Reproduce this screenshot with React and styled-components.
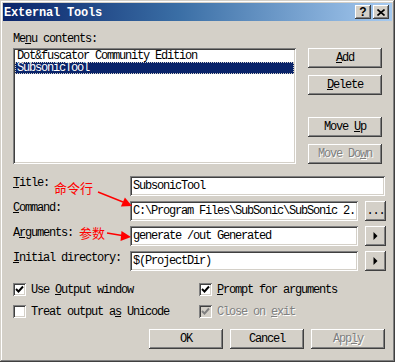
import styled, { createGlobalStyle } from "styled-components";

const Global = createGlobalStyle`
  html, body { margin: 0; padding: 0; background: #d4d0c8; }
  body {
    font-family: "Liberation Mono", "DejaVu Sans Mono", monospace;
    font-size: 12px;
    letter-spacing: -1.2px;
    color: #000;
  }
`;

const raised = `
  box-shadow: inset -1px -1px #404040, inset 1px 1px #ffffff,
    inset -2px -2px #808080, inset 2px 2px #d4d0c8;
`;

const sunken = `
  box-shadow: inset 1px 1px #808080, inset -1px -1px #ffffff,
    inset 2px 2px #404040, inset -2px -2px #d4d0c8;
`;

const Window = styled.div`
  position: relative;
  width: 395px;
  height: 362px;
  box-sizing: border-box;
  padding: 3px;
  background: #d4d0c8;
  box-shadow: inset -1px -1px #404040, inset 1px 1px #d4d0c8,
    inset -2px -2px #808080, inset 2px 2px #ffffff;
  display: flex;
  flex-direction: column;
`;

const TitleBar = styled.div`
  height: 18px;
  display: flex;
  align-items: center;
  padding: 0 3px 0 1px;
  background: linear-gradient(90deg, #0a246a 0%, #3a6ea5 45%, #a6caf0 100%);
  color: #fff;
  font-weight: bold;
  letter-spacing: -0.2px;
`;

const Caption = styled.span`
  flex: 1;
  padding-top: 1px;
`;

const CapButton = styled.button`
  width: 16px;
  height: 14px;
  margin-left: ${(p) => (p.$gap ? "2px" : "0")};
  padding: 0;
  border: none;
  background: #d4d0c8;
  ${raised}
  display: flex;
  align-items: center;
  justify-content: center;
  font: bold 12px "Liberation Sans", Arial, sans-serif;
  color: #000;
`;

const Body = styled.div`
  flex: 1;
  display: flex;
  flex-direction: column;
  padding: 12px 10px 0 10px;
`;

const u = (s) => <u>{s}</u>;

const Label = styled.div`
  line-height: 12px;
  white-space: nowrap;
  color: ${(p) => (p.$disabled ? "#808080" : "#000")};
  text-shadow: ${(p) => (p.$disabled ? "1px 1px #ffffff" : "none")};
`;

const TopRow = styled.div`
  display: flex;
  gap: 12px;
  margin-top: 3px;
`;

const ListBox = styled.div`
  width: 283px;
  height: 116px;
  box-sizing: border-box;
  padding: 2px;
  background: #fff;
  ${sunken}
`;

const Item = styled.div`
  height: 12px;
  line-height: 12px;
  padding-left: 2px;
  white-space: nowrap;
  color: ${(p) => (p.$selected ? "#fff" : "#000")};
  background: ${(p) => (p.$selected ? "#0a246a" : "transparent")};
  outline: ${(p) => (p.$selected ? "1px dotted #d4d0c8" : "none")};
  outline-offset: -1px;
`;

const ButtonColumn = styled.div`
  width: 74px;
  display: flex;
  flex-direction: column;
  gap: 7px;
`;

const Button = styled.button`
  width: ${(p) => p.$w || 74}px;
  height: 20px;
  margin-top: ${(p) => p.$mt || 0}px;
  padding: 0;
  border: none;
  background: #d4d0c8;
  ${raised}
  font: inherit;
  letter-spacing: inherit;
  color: ${(p) => (p.disabled ? "#808080" : "#000")};
  text-shadow: ${(p) => (p.disabled ? "1px 1px #ffffff" : "none")};
  display: flex;
  align-items: center;
  justify-content: center;
  white-space: pre;
`;

const Form = styled.div`
  display: grid;
  grid-template-columns: 117px 1fr;
  row-gap: 5px;
  margin-top: 12px;
`;

const FieldLabel = styled.div`
  line-height: 12px;
  padding-top: 1px;
  white-space: nowrap;
`;

const FieldRow = styled.div`
  display: flex;
  gap: 7px;
`;

const TextBox = styled.div`
  flex: 1;
  height: 20px;
  min-width: 0;
  box-sizing: border-box;
  padding: 0 3px;
  background: #fff;
  ${sunken}
  line-height: 20px;
  white-space: nowrap;
  overflow: hidden;
  margin-right: ${(p) => (p.$full ? "1px" : "0")};
`;

const Checks = styled.div`
  display: grid;
  grid-template-columns: 186px 1fr;
  row-gap: 9px;
  margin-top: 12px;
`;

const CheckRow = styled.div`
  display: flex;
  align-items: center;
  gap: 5px;
  height: 13px;
`;

const Box = styled.div`
  width: 13px;
  height: 13px;
  box-sizing: border-box;
  background: ${(p) => (p.$disabled ? "#d4d0c8" : "#fff")};
  ${sunken}
  display: flex;
  align-items: center;
  justify-content: center;
`;

const Footer = styled.div`
  display: flex;
  justify-content: flex-end;
  gap: 7px;
  margin: 11px -3px 0 0;
`;

const Overlay = styled.div`
  position: absolute;
  inset: 0;
  pointer-events: none;
`;

const Note = styled.span`
  position: absolute;
  left: ${(p) => p.$x}px;
  top: ${(p) => p.$y}px;
  font-family: "Noto Sans CJK SC", sans-serif;
  font-size: 13px;
  letter-spacing: 0;
  line-height: 16px;
  color: #f00;
`;

const Check = ({ color = "#000" }) => (
  <svg width="9" height="9" viewBox="0 0 9 9">
    <path d="M1 4 L3.5 6.5 L8 1.5" fill="none" stroke={color} strokeWidth="1.9" />
  </svg>
);

const Arrow = () => (
  <svg width="5" height="8" viewBox="0 0 5 8">
    <polygon points="0.5,0 4.5,4 0.5,8" fill="#000" />
  </svg>
);

const CheckItem = ({ checked, disabled, children }) => (
  <CheckRow>
    <Box $disabled={disabled}>{checked && <Check color={disabled ? "#808080" : "#000"} />}</Box>
    <Label $disabled={disabled}>{children}</Label>
  </CheckRow>
);

export default function App() {
  return (
    <>
      <Global />
      <Window>
        <TitleBar>
          <Caption>External Tools</Caption>
          <CapButton>?</CapButton>
          <CapButton $gap>
            <svg width="8" height="7" viewBox="0 0 8 7">
              <path d="M0.5 0.5 L7.5 6.5 M7.5 0.5 L0.5 6.5" stroke="#000" strokeWidth="1.6" />
            </svg>
          </CapButton>
        </TitleBar>
        <Body>
          <Label>Me{u("n")}u contents:</Label>
          <TopRow>
            <ListBox>
              <Item>Dot&amp;fuscator Community Edition</Item>
              <Item $selected>SubsonicTool</Item>
            </ListBox>
            <ButtonColumn>
              <Button><span>{u("A")}dd</span></Button>
              <Button><span>{u("D")}elete</span></Button>
              <Button $mt={15}><span>Move {u("U")}p</span></Button>
              <Button disabled><span>Move Do{u("w")}n</span></Button>
            </ButtonColumn>
          </TopRow>
          <Form>
            <FieldLabel>{u("T")}itle:</FieldLabel>
            <FieldRow>
              <TextBox $full>SubsonicTool</TextBox>
            </FieldRow>
            <FieldLabel>{u("C")}ommand:</FieldLabel>
            <FieldRow>
              <TextBox>C:\Program Files\SubSonic\SubSonic 2.</TextBox>
              <Button $w={21}>...</Button>
            </FieldRow>
            <FieldLabel>A{u("r")}guments:</FieldLabel>
            <FieldRow>
              <TextBox>generate /out Generated</TextBox>
              <Button $w={21}><Arrow /></Button>
            </FieldRow>
            <FieldLabel>{u("I")}nitial directory:</FieldLabel>
            <FieldRow>
              <TextBox>$(ProjectDir)</TextBox>
              <Button $w={21}><Arrow /></Button>
            </FieldRow>
          </Form>
          <Checks>
            <CheckItem checked>Use {u("O")}utput window</CheckItem>
            <CheckItem checked>{u("P")}rompt for arguments</CheckItem>
            <CheckItem>Treat output a{u("s")} Unicode</CheckItem>
            <CheckItem checked disabled>Close on {u("e")}xit</CheckItem>
          </Checks>
          <Footer>
            <Button>OK</Button>
            <Button>Cancel</Button>
            <Button disabled><span>App{u("l")}y</span></Button>
          </Footer>
        </Body>
        <Overlay>
          <Note $x={54} $y={180}>命令行</Note>
          <Note $x={79} $y={225}>参数</Note>
          <svg width="395" height="362" viewBox="0 0 395 362">
            <line x1="98" y1="192" x2="123" y2="202" stroke="#f00" strokeWidth="1.4" />
            <polygon points="132,206 124.9,197.4 120.9,206.6" fill="#f00" />
            <line x1="107" y1="233" x2="122" y2="235.5" stroke="#f00" strokeWidth="1.4" />
            <polygon points="131,237 121.5,231 120.5,241" fill="#f00" />
          </svg>
        </Overlay>
      </Window>
    </>
  );
}
